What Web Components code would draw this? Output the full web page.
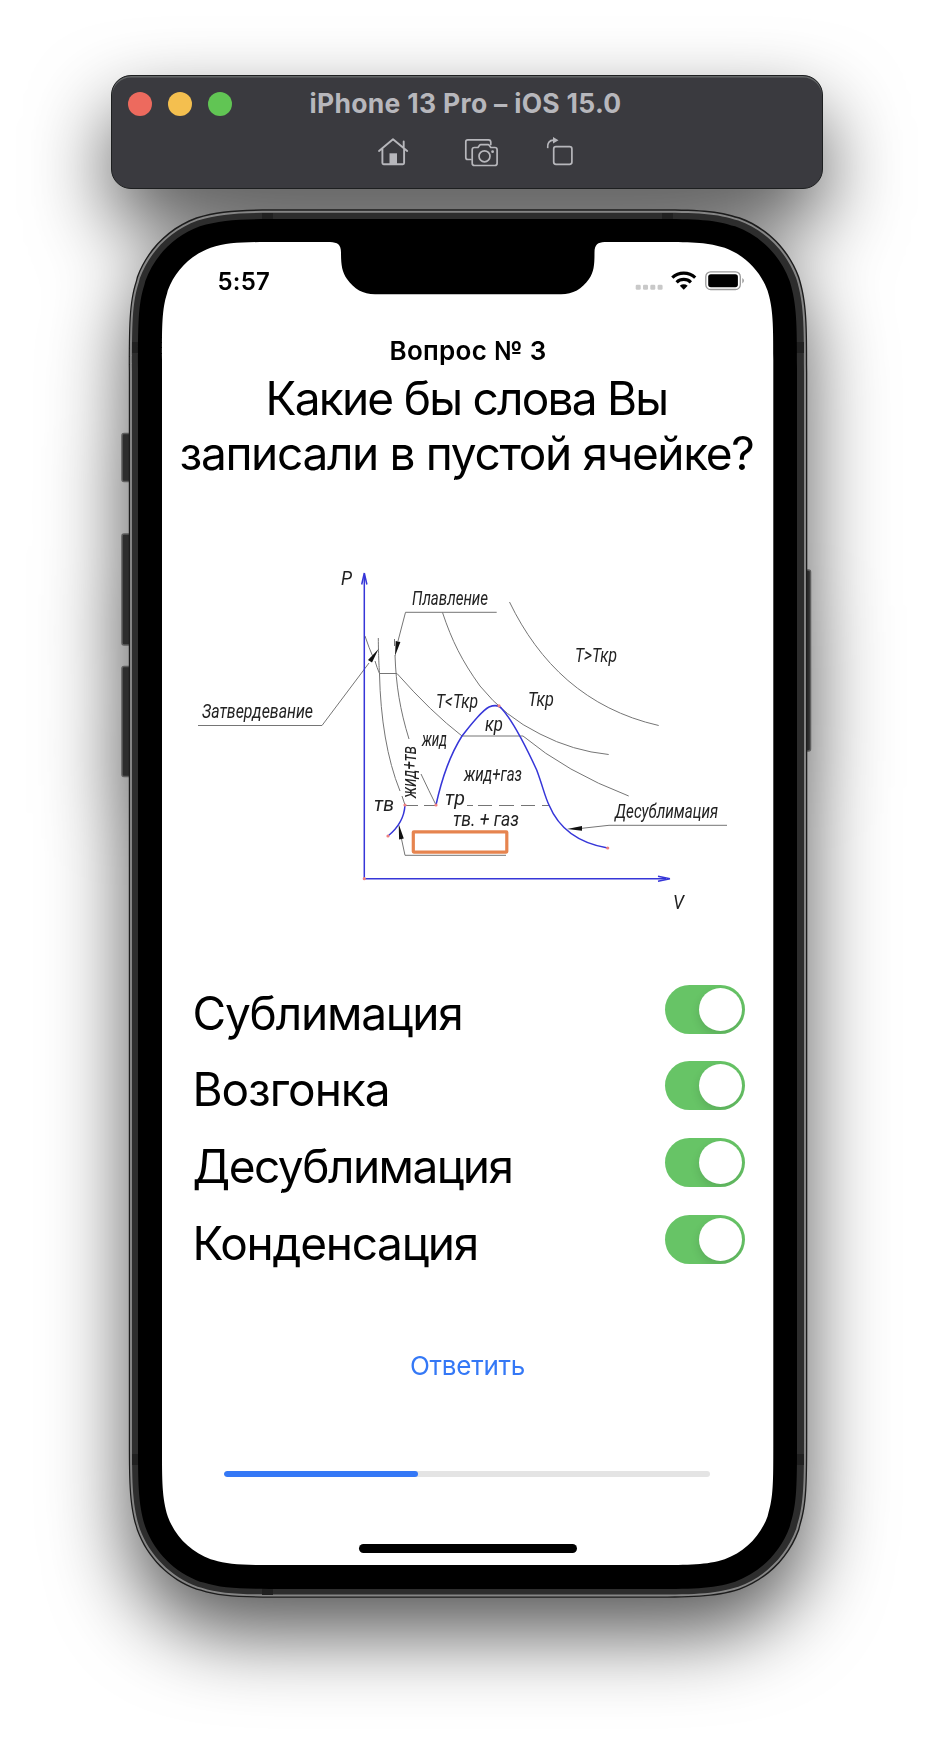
<!DOCTYPE html>
<html lang="ru">
<head>
<meta charset="utf-8">
<title>iPhone 13 Pro – iOS 15.0</title>
<style>
html,body{margin:0;background:#fff}
body{width:934px;height:1748px;overflow:hidden;font-family:Inter,"Noto Sans",sans-serif}
</style>
</head>
<body>
<simulator-app></simulator-app>
<script>
const define = (name, html, init) => customElements.define(name, class extends HTMLElement {
  constructor() {
    super();
    this.attachShadow({mode: 'open'}).innerHTML = html;
  }
  connectedCallback() { if (init) init(this, this.shadowRoot); }
});

/* Rounded rectangle with continuous (superelliptic) corners. */
function squircle(x0, y0, x1, y1, r) {
  const corner = m => {
    const p = (a, b) => m(a * r, b * r).map(n => n.toFixed(2)).join(' ');
    return `L${p(1.52866,0)}C${p(1.0885,0)} ${p(.8684,0)} ${p(.66993,.0655)}L${p(.63149,.07491)}C${p(.37282,.16906)} ${p(.16906,.37282)} ${p(.07491,.63149)}C${p(0,.8684)} ${p(0,1.0885)} ${p(0,1.52866)}`;
  };
  return ('M' + (x0 + x1) / 2 + ' ' + y0 +
    corner((a, b) => [x1 - a, y0 + b]) +
    corner((a, b) => [x1 - b, y1 - a]) +
    corner((a, b) => [x0 + a, y1 - b]) +
    corner((a, b) => [x0 + b, y0 + a]) + 'Z');
}

/* Single line of text tracked to a given width. */
define('fit-text', `<style>:host{display:inline-block;white-space:nowrap}</style><span><slot></slot></span>`, (el, root) => {
  const target = +el.getAttribute('w'), s = root.querySelector('span');
  const n = el.textContent.length;
  const d = (target - s.getBoundingClientRect().width) / n;
  s.style.letterSpacing = d.toFixed(3) + 'px';
});

define('title-bar', `<style>
:host{display:flex;flex-direction:column;box-sizing:border-box;width:712px;height:114px;border-radius:20px;background:#3a3a3f;border:1px solid #1d1f20;box-shadow:inset 0 1.5px 0 #646768;color:#b7b7bc}
.top{display:grid;grid-template-columns:160px 1fr 160px;height:55px;align-items:center}
.lights{display:flex;gap:16px;padding:1px 0 0 16px}
i{width:24px;height:24px;border-radius:50%}
h1{margin:-2px 0 0;text-align:center;font-size:26.500px;line-height:32px;font-weight:700;padding-right:3px}
.tools{display:flex;padding:5px 0 0 265px;align-items:flex-start}
svg{display:block;fill:none;stroke:#b7b7bc;stroke-width:1.7;stroke-linejoin:round;stroke-linecap:round}
.f{fill:#b7b7bc;stroke:none}
</style>
<div class="top"><div class="lights"><i style="background:#ed6a5e"></i><i style="background:#f4bf4f"></i><i style="background:#61c554"></i></div>
<h1><fit-text w="312">iPhone 13 Pro – iOS 15.0</fit-text></h1></div>
<div class="tools">
<svg width="32" height="32" viewBox="377 136 32 32"><path d="M379 151l14-11.800 14.200 11.800M382.400 149v14q0 1.200 1.200 1.200h19.300q1.200 0 1.200-1.200v-14M403.700 147.500v-6" stroke-width="1.900"/><path class="f" d="M389.500 153.300h7.500v11h-7.500z"/></svg>
<svg style="margin-left:55px" width="35" height="32" viewBox="464 136 35 32"><path d="M471 159.500h-3.200q-2 0-2-2v-15.700q0-2 2-2h20.700q2.300 0 2.300 2.500v2.200"/><path d="M474.500 147.500h3.500l1.600-2.300q.4-.5 1.200-.5h7.200q.8 0 1.200.5l1.600 2.300h4q2.300 0 2.300 2.300v13.400q0 2.300-2.300 2.300h-20.300q-2.300 0-2.300-2.300v-13.400q0-2.300 2.300-2.300z"/><circle cx="484.500" cy="156.300" r="5.500"/><circle class="f" cx="492.600" cy="151.700" r="1.400"/></svg>
<svg style="margin-left:47px" width="28" height="32" viewBox="546 136 28 32"><rect x="553.700" y="146.700" width="18.200" height="17.700" rx="2.300"/><path d="M547.700 147.500c-.4-4.200 1.500-7.400 6-7.400"/><path class="f" d="M553 137l5.500 3.200-5.500 3.300z"/></svg>
</div>`);

/* Phone body: side keys, metal band, glass bezel and screen. */
define('phone-shell', `<style>
:host{display:block;position:relative;width:702px;height:1390px}
svg{position:absolute;inset:0}
.content{position:relative;box-sizing:border-box;height:100%;padding:34px 45px 33px 46px}
</style>
<svg width="702" height="1390" viewBox="116 208 702 1390">
<g fill="#2d2d2d" stroke="#5e5e5e" stroke-width="1.500"><rect x="122" y="433.500" width="14" height="48" rx="2"/><rect x="122" y="534" width="14" height="111" rx="2"/><rect x="122" y="666.500" width="14" height="110" rx="2"/><rect x="799" y="570" width="11.500" height="181" rx="2"/></g>
<path class="o" fill="#1c1c1c"/><path class="a" fill="#858585"/><path class="b" fill="#2d2d2d"/>
<g fill="#202020"><path d="M262 213h11v8h-11zM662 213h11v8h-11zM262 1587h11v8h-11zM132 342h8v11h-8zM796 342h8v11h-8zM132 1454h8v11h-8zM796 1454h8v11h-8z"/></g>
<path class="k" fill="#000"/><path class="s" fill="#fff"/>
<path fill="#000" d="M330 241.500v.6c7.500.4 11 2.400 11 10.400 0 12 1 19.500 6 26.500 7 10 16 15.300 28 15.300h186c12 0 21-5.300 28-15.300 5-7 5.500-14.500 5.500-26.500 0-8 3.500-10 10-10.400v-.6z"/>
</svg><div class="content"><slot></slot></div>`, (el, root) => {
  const set = (c, ...a) => root.querySelector('.' + c).setAttribute('d', squircle(...a));
  set('o', 128.8, 209.3, 807.300, 1597.700, 107);
  set('a', 130, 210.700, 806, 1596.400, 106);
  set('b', 132, 212.700, 804, 1594.500, 104);
  set('k', 138, 219, 797, 1589, 98);
  set('s', 162, 242, 773.300, 1565, 77);
});

define('status-bar', `<style>
:host{display:flex;justify-content:space-between;height:80px;align-items:flex-start;padding:25px 27px 0 55.500px;box-sizing:border-box}
b{font-size:24px;font-weight:600;line-height:30px}
svg{margin-top:1px}
</style><b><fit-text w="52.500">5:57</fit-text></b>
<svg width="112" height="24" viewBox="634 268 112 24"><g fill="#c9c9c9"><rect x="635.700" y="284.800" width="5" height="5" rx="1.300"/><rect x="643" y="284.800" width="5" height="5" rx="1.300"/><rect x="650.300" y="284.800" width="5" height="5" rx="1.300"/><rect x="657.600" y="284.800" width="5" height="5" rx="1.300"/></g>
<g fill="none" stroke="#000" stroke-width="3.200"><path d="M672.300 277.700a16.500 16.500 0 0 1 22.900 0"/><path d="M676.600 282.300a10.300 10.300 0 0 1 14.300 0"/></g><path d="M679.800 285.700q3.900-2.900 7.900 0l-3.950 4z"/>
<rect x="705.800" y="271.900" width="34.500" height="17.600" rx="4.800" fill="none" stroke="#999" stroke-width="1.300"/><rect x="708.200" y="274.200" width="29.700" height="13" rx="2.600"/><path fill="#999" d="M742.300 278q3.300 2.600 0 5.400z"/></svg>`);

define('phase-diagram', `<style>
:host{display:block}
svg{display:block}
text{font-family:Roboto,"Liberation Sans",sans-serif;font-style:italic;font-size:20px;fill:#222;stroke:none}
.g{fill:none;stroke:#757575;stroke-width:1}
.u{fill:none;stroke:#3636d8;stroke-width:1.500}
.r{fill:#f08080}
</style>
<svg width="560" height="380" viewBox="190 550 560 380">
<g class="g">
<path d="M365 636q4 12 8 21M375 661q2 7 4.500 12.500H397Q431 712 462 736H523Q566 772 628.700 796"/>
<path d="M378.300 638C378.500 658 379 665 379.500 674C380.500 718 387 759 400 791M402 796l3 9"/>
<path d="M394.500 639v7M395 655C396 685 400 710 409 739M421 774q8 17 15 31"/>
<path d="M442.500 612.500C452 641 462 661 480 686Q505 717 540 734Q573 751 608.700 754.500"/>
<path d="M509.500 602C539 663 586 709 658.700 725.500"/>
<path d="M198 725.500H322L369 663M496.700 612.300H405.500L398 641M727 825.300H609L580 828.500M506 855.300H405L401.500 839"/>
<path d="M405 805.500H418M424 805.500H435M467 805.500h6M478 805.500h14M499 805.500h15M521 805.500h14M542 805.500h7"/>
</g>
<g fill="#111"><path d="M378.500 649l-10.500 11 4 2.500zM395 656l.7-15 4.700 1zM567 829l15-3v4.700zM398.700 824l.4 15.500 4.700-.9z"/></g>
<g class="u"><path d="M364.300 878.700V576M364.300 878.700H666"/><path d="M364.300 573l-2.600 11.500M364.300 573l2.600 11.500M670 878.700l-12-2.500M670 878.700l-12 2.500"/>
<path d="M436 805C441 782 450 755 462 736C470 726 481 711 489 707C494 705 499 705 502 709C512 720 527 749 536.700 770C543 787 545 797 549 805C559 829 578 843 607.700 848M405 805Q404 823 388 836"/></g>
<g class="r"><circle cx="405" cy="805" r="1.600"/><circle cx="436" cy="805" r="1.600"/><circle cx="499" cy="705.800" r="1.600"/><circle cx="388" cy="836" r="1.600"/><circle cx="607.700" cy="848" r="1.600"/><circle cx="364.300" cy="878.700" r="1.600"/></g>
<rect x="413.300" y="831.800" width="93.500" height="20.300" rx=".5" fill="#fff" stroke="#e6844f" stroke-width="3.200"/>
<text x="341" y="585" textLength="11" lengthAdjust="spacingAndGlyphs">Р</text>
<text x="412" y="605" textLength="76" lengthAdjust="spacingAndGlyphs">Плавление</text>
<text x="202" y="717.500" textLength="111" lengthAdjust="spacingAndGlyphs">Затвердевание</text>
<text x="575" y="661.500" textLength="42" lengthAdjust="spacingAndGlyphs">Т&gt;Ткр</text>
<text x="528" y="706" textLength="26" lengthAdjust="spacingAndGlyphs">Ткр</text>
<text x="436" y="707.500" textLength="42" lengthAdjust="spacingAndGlyphs">Т&lt;Ткр</text>
<text x="485" y="730.500" textLength="18" lengthAdjust="spacingAndGlyphs">кр</text>
<text x="422" y="746" textLength="25" lengthAdjust="spacingAndGlyphs">жид</text>
<text x="464" y="780.500" textLength="58" lengthAdjust="spacingAndGlyphs">жид+газ</text>
<text x="374" y="811" font-size="20" textLength="20" lengthAdjust="spacingAndGlyphs">тв</text>
<text x="445" y="805" textLength="20" lengthAdjust="spacingAndGlyphs">тр</text>
<text x="453" y="825.500" textLength="66" lengthAdjust="spacingAndGlyphs">тв. + газ</text>
<text transform="translate(415.500 798) rotate(-90)" textLength="52" lengthAdjust="spacingAndGlyphs">жид+тв</text>
<text x="615" y="818" textLength="103" lengthAdjust="spacingAndGlyphs">Десублимация</text>
<text x="673" y="909" textLength="11" lengthAdjust="spacingAndGlyphs">V</text>
</svg>`);

define('toggle-switch', `<style>
:host{display:block;box-sizing:border-box;width:80px;height:49px;border-radius:24.500px;background:#67c466;padding:3px 3px 3px 34px;overflow:hidden}
i{display:block;width:43px;height:43px;border-radius:50%;background:#fff;box-shadow:0 4px 10px rgba(0,0,0,.12)}
</style><i></i>`);

define('answer-row', `<style>
:host{display:flex;justify-content:space-between;height:76.800px;font-size:46px;line-height:56px}
</style><div><slot></slot></div><toggle-switch></toggle-switch>`);

define('progress-track', `<style>
:host{display:block;width:486px;height:6.300px;border-radius:3px;background:#e4e4e4;overflow:hidden}
i{display:block;width:40%;height:100%;border-radius:3px;background:#3478f6}
</style><i></i>`);

define('quiz-screen', `<style>
:host{display:flex;flex-direction:column;color:#000;height:1243px}
h2{margin:12.500px 0 0;text-align:center;font-size:26px;line-height:32px;font-weight:600;padding-left:1px}
.q{text-align:center;font-size:46px;line-height:55.800px;margin-top:4px;height:112px;margin-right:2px}
phase-diagram{margin:67.500px 0 0 28px}
.rows{padding:54.500px 28px 0 30.500px;height:308.500px}
button{appearance:none;border:0;background:none;font:400 26px/32px Inter,sans-serif;color:#3478f6;align-self:center;padding:0;margin-top:57px}
progress-track{margin:88.500px 0 0 62px}
.home{width:218px;height:8.500px;border-radius:5px;background:#000;margin:67.500px 0 0 197px}
</style>
<h2><fit-text w="157">Вопрос № 3</fit-text></h2>
<div class="q"><fit-text w="402">Какие бы слова Вы</fit-text><br><fit-text w="574">записали в пустой ячейке?</fit-text></div>
<phase-diagram></phase-diagram>
<div class="rows">
<answer-row><fit-text w="270">Сублимация</fit-text></answer-row>
<answer-row><fit-text w="197">Возгонка</fit-text></answer-row>
<answer-row><fit-text w="320">Десублимация</fit-text></answer-row>
<answer-row><fit-text w="285.500">Конденсация</fit-text></answer-row>
</div>
<button><fit-text w="115">Ответить</fit-text></button>
<progress-track></progress-track>
<div class="home"></div>`);

define('simulator-app', `<style>
:host{display:flex;flex-direction:column;box-sizing:border-box;width:934px;height:1748px;padding-top:75px;filter:drop-shadow(0 36px 40px rgba(0,0,0,.66))}
title-bar{margin-left:111px}
phone-shell{margin:19px 0 0 116px}
</style>
<title-bar></title-bar>
<phone-shell><status-bar></status-bar><quiz-screen></quiz-screen></phone-shell>`);
</script>
</body>
</html>
